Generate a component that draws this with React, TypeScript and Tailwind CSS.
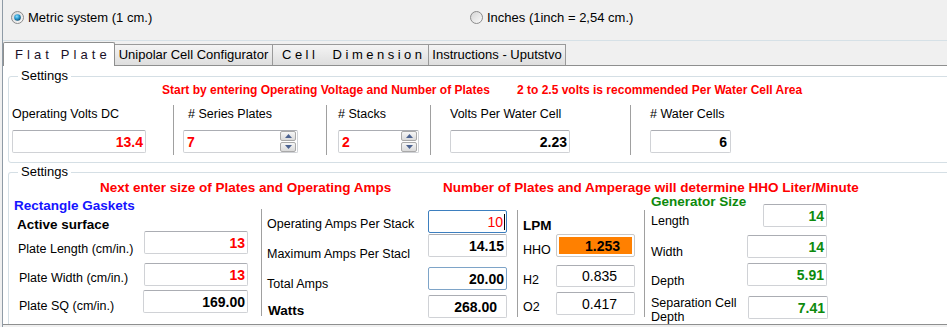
import React from "react";

function Radio({ checked }: { checked?: boolean }) {
  const id = checked ? "rOn" : "rOff";
  return (
    <svg width="13" height="13" viewBox="0 0 13 13" className="shrink-0">
      <defs>
        <linearGradient id={id + "bg"} x1="0" y1="0" x2="1" y2="1">
          <stop offset="0" stopColor="#d4d4d4" />
          <stop offset="1" stopColor="#fbfbfb" />
        </linearGradient>
        <radialGradient id={id + "dot"} cx="0.4" cy="0.35" r="0.7">
          <stop offset="0" stopColor="#8fe0ff" />
          <stop offset="0.5" stopColor="#2a9ad0" />
          <stop offset="1" stopColor="#0b4a6e" />
        </radialGradient>
      </defs>
      <circle cx="6.5" cy="6.5" r="6" fill={`url(#${id}bg)`} stroke="#8b8b8b" strokeWidth="1" />
      {checked && <circle cx="6.5" cy="6.5" r="3.3" fill={`url(#${id}dot)`} />}
    </svg>
  );
}

function Spin() {
  return (
    <div className="flex flex-col w-[16px] h-[21px] ml-auto mr-px gap-px">
      <div className="flex-1 border border-[#a9a9a9] rounded-[2px] bg-linear-to-b from-[#f6f6f6] to-[#dadada] flex items-center justify-center">
        <svg width="7" height="4" viewBox="0 0 7 4">
          <path d="M0 4 L3.5 0 L7 4Z" fill="#4b6290" />
        </svg>
      </div>
      <div className="flex-1 border border-[#a9a9a9] rounded-[2px] bg-linear-to-b from-[#f6f6f6] to-[#dadada] flex items-center justify-center">
        <svg width="7" height="4" viewBox="0 0 7 4">
          <path d="M0 0 L3.5 4 L7 0Z" fill="#4b6290" />
        </svg>
      </div>
    </div>
  );
}

function Field({ cls, text, tcls }: { cls: string; text: string; tcls: string }) {
  return (
    <div className={`shrink-0 flex items-center justify-end rounded-[2px] bg-white border ${cls}`}>
      <span className={tcls}>{text}</span>
    </div>
  );
}

const gray = "border-[#d0d2d6] border-t-[#abadb3]";
const val = "text-[14px] font-bold leading-[16px]";
const lbl = "text-[12.5px] leading-[14px] whitespace-nowrap";

function Sep({ cls }: { cls: string }) {
  return <div className={`w-px shrink-0 bg-[#a0a0a0] ${cls}`} />;
}

export default function App() {
  return (
    <div className="w-[947px] h-[327px] overflow-hidden bg-[#f0f0f0] text-black font-['Liberation_Sans',Arial,sans-serif]">
      <div className="ml-[2px] h-full border-l border-[#8f9ba6] flex flex-col">
        {/* unit selection */}
        <div className="h-[41px] shrink-0 border-b border-[#d6e1e7] flex items-start pt-[11px]">
          <label className="flex items-center gap-[4px] ml-[8px] w-[459px] text-[13px] leading-[13px]">
            <Radio checked />
            Metric system (1 cm.)
          </label>
          <label className="flex items-center gap-[4px] text-[13px] leading-[13px]">
            <Radio />
            Inches (1inch = 2,54 cm.)
          </label>
        </div>

        {/* tabs */}
        <div className="h-[24px] shrink-0 flex items-end relative z-10 text-[13px]">
          <div className="h-[24px] -mb-px w-[112px] border border-b-0 border-[#8e8f8f] bg-white rounded-t-[2px] flex items-center pl-[11px] tracking-[4.1px] text-[#1a1028]">
            Flat Plate
          </div>
          <div className="h-[21px] w-[158px] border border-b-0 border-l-0 border-[#9a9a9a] bg-linear-to-b from-[#f4f4f4] to-[#dedede] flex items-center justify-center">
            Unipolar Cell Configurator
          </div>
          <div className="h-[21px] w-[156px] border border-b-0 border-l-0 border-[#9a9a9a] bg-linear-to-b from-[#f4f4f4] to-[#dedede] flex items-center pl-[9px] tracking-[3.5px] whitespace-pre">
            {"Cell  Dimension"}
          </div>
          <div className="h-[21px] w-[137px] border border-b-0 border-l-0 border-[#9a9a9a] bg-linear-to-b from-[#f4f4f4] to-[#dedede] flex items-center justify-center">
            Instructions - Uputstvo
          </div>
        </div>

        {/* tab panel */}
        <div className="h-[260px] shrink-0 bg-white border-t border-b border-[#8e8f8f] overflow-hidden">
          {/* Settings 1 */}
          <div className="relative mt-[10px] ml-[5px] w-[960px] h-[87px] border border-[#d5dfe5] rounded-[3px]">
            <span className="absolute left-[9px] top-[-9px] bg-white px-[3px] text-[13px] leading-[15px]">Settings</span>
            <div className="flex pt-[6px] text-[12px] font-bold leading-[14px] text-[#ff0000]">
              <span className="ml-[153px] w-[355px]">Start by entering Operating Voltage and Number of Plates</span>
              <span>2 to 2.5 volts is recommended Per Water Cell Area</span>
            </div>
            <div className="flex mt-[8px]">
              <div className="w-[164px] h-[50px] pl-[3px] pt-[2px] flex flex-col">
                <span className={lbl}>Operating Volts DC</span>
                <Field cls={`mt-[9px] w-[134px] h-[23px] pr-[2px] ${gray}`} text="13.4" tcls={`${val} text-[#ff0000]`} />
              </div>
              <div className="w-[153px] h-[50px] border-l border-[#a0a0a0] pl-[9px] pt-[2px] flex flex-col">
                <span className={`${lbl} ml-[5px]`}># Series Plates</span>
                <div className={`mt-[9px] w-[115px] h-[23px] rounded-[2px] border ${gray} flex items-center pl-[3px]`}>
                  <span className={`${val} text-[#ff0000]`}>7</span>
                  <Spin />
                </div>
              </div>
              <div className="w-[104px] h-[50px] border-l border-[#a0a0a0] pl-[11px] pt-[2px] flex flex-col">
                <span className={lbl}># Stacks</span>
                <div className={`mt-[9px] w-[81px] h-[23px] rounded-[2px] border ${gray} flex items-center pl-[3px]`}>
                  <span className={`${val} text-[#ff0000]`}>2</span>
                  <Spin />
                </div>
              </div>
              <div className="w-[200px] h-[50px] border-l border-[#a0a0a0] pl-[19px] pt-[2px] flex flex-col">
                <span className={lbl}>Volts Per Water Cell</span>
                <Field cls={`mt-[9px] w-[120px] h-[23px] pr-[2px] ${gray}`} text="2.23" tcls={val} />
              </div>
              <div className="w-[200px] h-[50px] border-l border-[#a0a0a0] pl-[19px] pt-[2px] flex flex-col">
                <span className={lbl}># Water Cells</span>
                <Field cls={`mt-[9px] w-[81px] h-[23px] pr-[3px] ${gray}`} text="6" tcls={val} />
              </div>
            </div>
          </div>

          {/* Settings 2 */}
          <div className="relative mt-[9px] ml-[5px] w-[960px] h-[152px] border border-b-0 border-[#d5dfe5] rounded-t-[3px]">
            <span className="absolute left-[9px] top-[-9px] bg-white px-[3px] text-[13px] leading-[15px]">Settings</span>
            <div className="flex pt-[7px] text-[13.5px] font-bold leading-[16px] text-[#ff0000]">
              <span className="ml-[91px] w-[343px]">Next enter size of Plates and Operating Amps</span>
              <span>Number of Plates and Amperage will determine HHO Liter/Minute</span>
            </div>
            <div className="flex items-start -mt-px">
              {/* active surface */}
              <div className="w-[252px] shrink-0 flex flex-col">
                <span className="mt-[3px] pl-[5px] text-[13.5px] font-bold leading-[16px] text-[#1414ff]">Rectangle Gaskets</span>
                <span className="mt-[4px] pl-[8px] text-[13.5px] font-bold leading-[14px]">Active surface</span>
                <div className="flex -mt-px">
                  <span className={`${lbl} w-[135px] pl-[9px] mt-[11px]`}>Plate Length (cm/in.)</span>
                  <Field cls={`w-[104px] h-[23px] pr-[2px] ${gray}`} text="13" tcls={`${val} text-[#ff0000]`} />
                </div>
                <div className="flex mt-[7px]">
                  <span className={`${lbl} w-[135px] pl-[10px] mt-[8px]`}>Plate Width (cm/in.)</span>
                  <Field cls={`w-[104px] h-[23px] pr-[2px] ${gray}`} text="13" tcls={`${val} text-[#ff0000]`} />
                </div>
                <div className="flex mt-[4px]">
                  <span className={`${lbl} w-[134px] pl-[10px] mt-[9px]`}>Plate SQ (cm/in.)</span>
                  <Field cls={`w-[105px] h-[23px] pr-[2px] ${gray}`} text="169.00" tcls={val} />
                </div>
              </div>
              <Sep cls="h-[107px] mt-[14px]" />

              {/* amps */}
              <div className="w-[255px] shrink-0 flex flex-col">
                <div className="flex mt-[15px]">
                  <span className={`${lbl} w-[166px] pl-[5px] mt-[7px]`}>Operating Amps Per Stack</span>
                  <div className="shrink-0 w-[79px] h-[23px] rounded-[2px] border border-[#3d7fbf] flex items-center justify-end">
                    <span className="text-[14px] leading-[16px] text-[#ff0000]">10</span>
                    <span className="w-px h-[16px] bg-black ml-px mr-px" />
                  </div>
                </div>
                <div className="flex mt-[1px]">
                  <span className={`${lbl} w-[166px] pl-[5px] mt-[13px]`}>Maximum Amps Per Stacl</span>
                  <Field cls={`w-[79px] h-[23px] pr-[2px] ${gray}`} text="14.15" tcls={val} />
                </div>
                <div className="flex mt-[6px]">
                  <span className={`${lbl} w-[166px] pl-[5px] mt-[10px]`}>Total Amps</span>
                  <Field cls="w-[79px] h-[23px] pr-[2px] border-[#7ea4c8]" text="20.00" tcls={val} />
                </div>
                <div className="flex mt-[4px]">
                  <span className="w-[166px] pl-[6px] mt-[9px] text-[13.5px] font-bold leading-[14px]">Watts</span>
                  <Field cls={`w-[79px] h-[23px] pr-[9px] ${gray}`} text="268.00" tcls={val} />
                </div>
              </div>
              <Sep cls="h-[107px] mt-[15px]" />

              {/* LPM */}
              <div className="w-[126px] shrink-0 flex flex-col">
                <span className="mt-[24px] pl-[5px] text-[13.5px] font-bold leading-[14px]">LPM</span>
                <div className="flex mt-px">
                  <span className={`${lbl} w-[38px] pl-[5px] mt-[9px]`}>HHO</span>
                  <div className="shrink-0 w-[79px] h-[23px] rounded-[2px] border border-[#c9c9c9] p-[2px]">
                    <div className="w-full h-full bg-[#ff8000] flex items-center justify-end pr-[12px]">
                      <span className={val}>1.253</span>
                    </div>
                  </div>
                </div>
                <div className="flex mt-[8px]">
                  <span className={`${lbl} w-[38px] pl-[5px] mt-[8px]`}>H2</span>
                  <Field cls={`w-[79px] h-[22px] pr-[17px] ${gray}`} text="0.835" tcls="text-[14px] leading-[16px]" />
                </div>
                <div className="flex mt-[5px]">
                  <span className={`${lbl} w-[38px] pl-[5px] mt-[8px]`}>O2</span>
                  <Field cls={`w-[79px] h-[23px] pr-[17px] ${gray}`} text="0.417" tcls="text-[14px] leading-[16px]" />
                </div>
              </div>
              <Sep cls="h-[107px] mt-[15px]" />

              {/* generator */}
              <div className="w-[200px] shrink-0 flex flex-col">
                <span className="pl-[6px] text-[13.5px] font-bold leading-[14px] text-[#0d8a0d]">Generator Size</span>
                <div className="flex -mt-[5px]">
                  <span className={`${lbl} w-[118px] pl-[6px] mt-[10px]`}>Length</span>
                  <Field cls={`w-[64px] h-[23px] pr-[2px] ${gray}`} text="14" tcls={`${val} text-[#0d8a0d]`} />
                </div>
                <div className="flex mt-[7px]">
                  <span className={`${lbl} w-[102px] pl-[6px] mt-[10px]`}>Width</span>
                  <Field cls={`w-[80px] h-[23px] pr-[2px] ${gray}`} text="14" tcls={`${val} text-[#0d8a0d]`} />
                </div>
                <div className="flex mt-[4px]">
                  <span className={`${lbl} w-[102px] pl-[6px] mt-[11px]`}>Depth</span>
                  <Field cls={`w-[80px] h-[23px] pr-[2px] ${gray}`} text="5.91" tcls={`${val} text-[#0d8a0d]`} />
                </div>
                <div className="flex mt-[8px]">
                  <span className={`${lbl} w-[103px] pl-[6px]`}>
                    Separation Cell
                    <br />
                    Depth
                  </span>
                  <Field cls={`w-[80px] h-[23px] pr-[2px] ${gray}`} text="7.41" tcls={`${val} text-[#0d8a0d]`} />
                </div>
              </div>
            </div>
          </div>
        </div>
      </div>
    </div>
  );
}
